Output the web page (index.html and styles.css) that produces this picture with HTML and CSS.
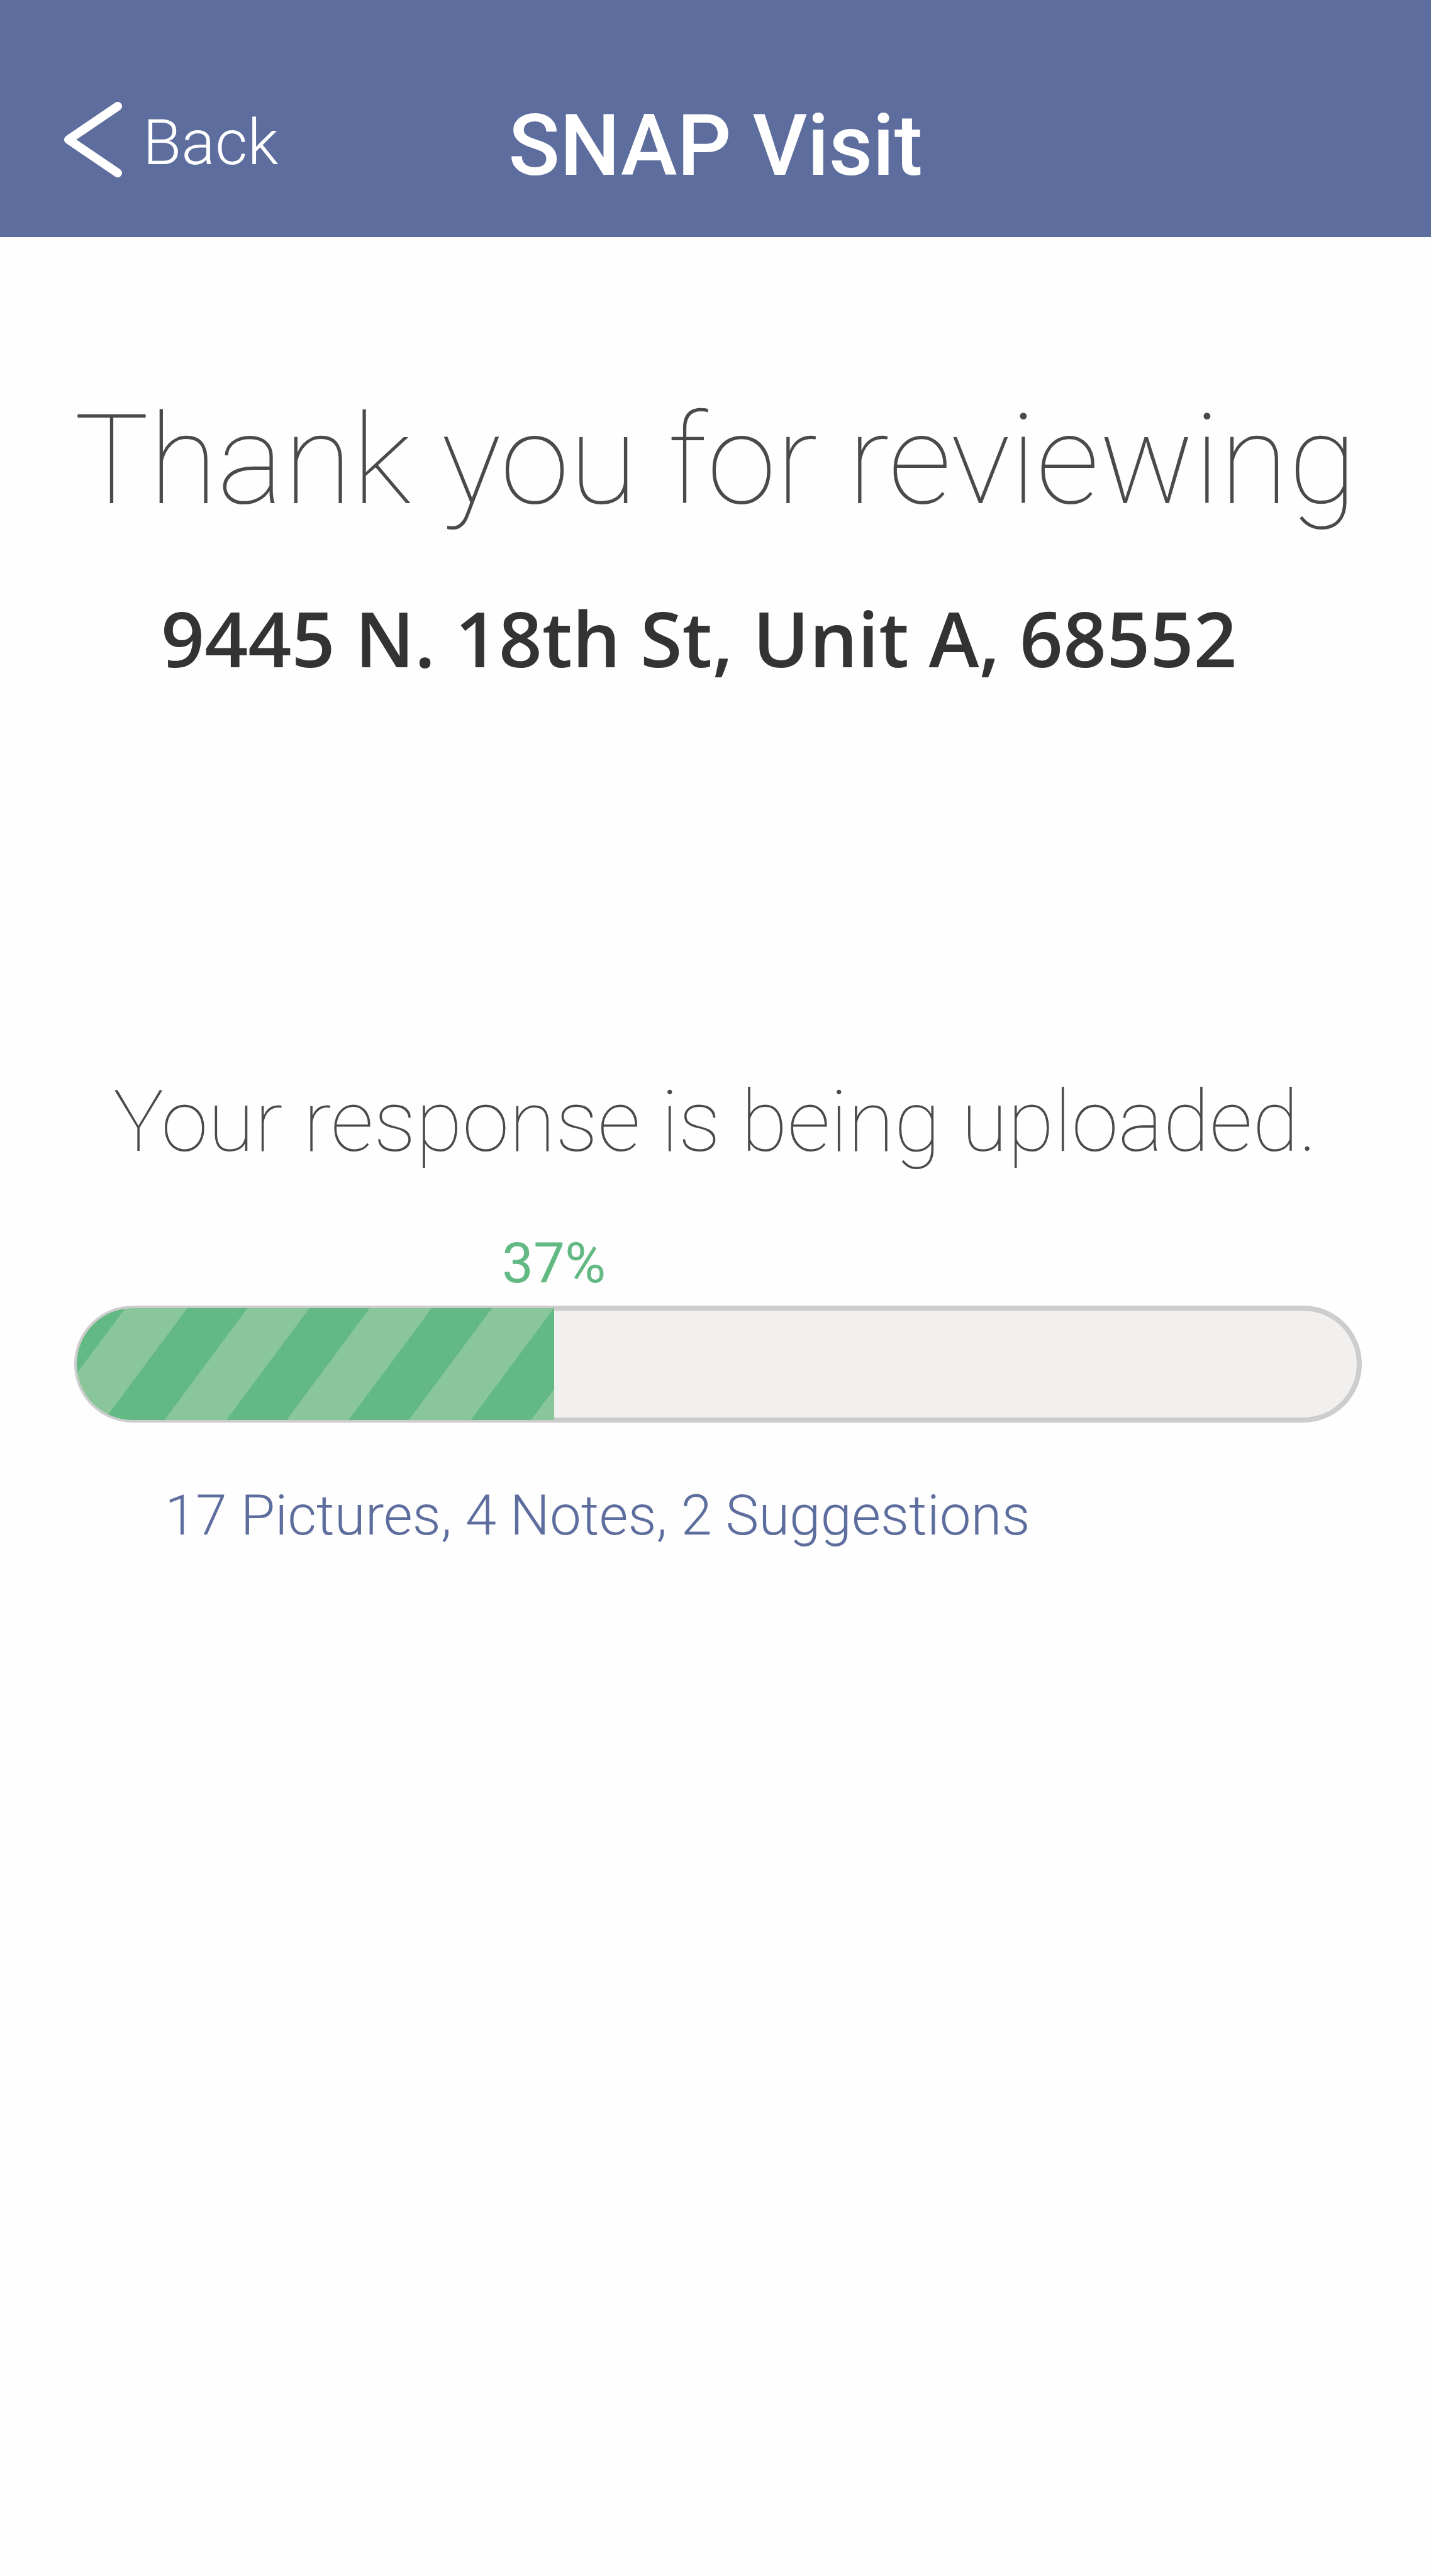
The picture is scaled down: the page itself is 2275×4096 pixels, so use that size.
FILE: index.html
```html
<!DOCTYPE html>
<html lang="en">
<head>
<meta charset="utf-8">
<meta name="viewport" content="width=device-width, initial-scale=1">
<title>SNAP Visit</title>
<link rel="stylesheet" href="styles.css">
</head>
<body>
<header class="topbar">
  <a class="back" href="#">
    <svg class="back-icon" viewBox="0 0 94 122" aria-hidden="true"><path d="M86 8 8 61l78 53"/></svg>
    <span class="back-label">Back</span>
  </a>
  <div class="topbar-title">SNAP Visit</div>
</header>
<main class="content">
  <h1 class="thanks">Thank you for reviewing</h1>
  <p class="address">9445 N. 18th St, Unit A, 68552</p>
  <section class="upload">
    <p class="status">Your response is being uploaded.</p>
    <label class="percent" for="upload-progress" style="width: 74.5%">37%</label>
    <progress class="bar" id="upload-progress" max="100" value="37.2"></progress>
    <p class="summary">17 Pictures, 4 Notes, 2 Suggestions</p>
  </section>
</main>
</body>
</html>
```

FILE: styles.css
```css
* {
  box-sizing: border-box;
}

body {
  margin: 0;
  min-height: 100vh;
  background: #fefefe;
  color: #4a4a4a;
  font-family: Roboto, sans-serif;
}

h1,
p {
  margin: 0;
}

/* Header */
.topbar {
  display: grid;
  grid-template-columns: 1fr auto 1fr;
  align-items: start;
  padding: 161px 101px 74px;
  background: #5d6d9d;
  color: #fff;
}

.back {
  display: flex;
  align-items: flex-start;
  justify-self: start;
  gap: 32px;
  color: inherit;
  text-decoration: none;
}

.back-icon {
  width: 94px;
  height: 122px;
  fill: none;
  stroke: currentColor;
  stroke-width: 14;
  stroke-linecap: round;
  stroke-linejoin: round;
}

.back-label {
  font-size: 100px;
  font-weight: 300;
  line-height: 132px;
}

.topbar-title {
  font-size: 135px;
  font-weight: 500;
  line-height: 142px;
}

/* Content */
.content {
  padding: 235px 110px 120px 118px;
}

.thanks {
  font-size: 199px;
  font-weight: 100;
  line-height: 240px;
  white-space: nowrap;
}

.address {
  margin-top: 82px;
  padding-left: 138px;
  color: #333;
  font-family: "Open Sans", sans-serif;
  font-size: 121px;
  font-weight: 600;
  line-height: 160px;
}

.upload {
  margin-top: 610px;
}

.status {
  padding-left: 62px;
  font-size: 135px;
  font-weight: 100;
  line-height: 160px;
}

/* The label box is twice the filled width, so its text centres on the fill's end */
.percent {
  display: block;
  margin-top: 95px;
  color: #63b984;
  font-size: 89px;
  line-height: 100px;
  text-align: center;
}

.bar {
  appearance: none;
  display: block;
  width: 100%;
  height: 186px;
  margin-top: 17px;
  overflow: hidden;
  border: 4px solid #ccc;
  border-radius: 93px;
  background: #f1f0ee;
  box-shadow: inset 0 0 0 4px #ccc;
}

.bar::-webkit-progress-bar {
  background: transparent;
}

.bar::-webkit-progress-value {
  background: repeating-linear-gradient(
    126.6deg,
    #63b984 0 62px,
    #89c79a 62px 141px,
    #63b984 141px 156px
  );
}

.summary {
  margin-top: 98px;
  padding-left: 144px;
  color: #5d6d9d;
  font-size: 89px;
  font-weight: 300;
  line-height: 100px;
}
```
